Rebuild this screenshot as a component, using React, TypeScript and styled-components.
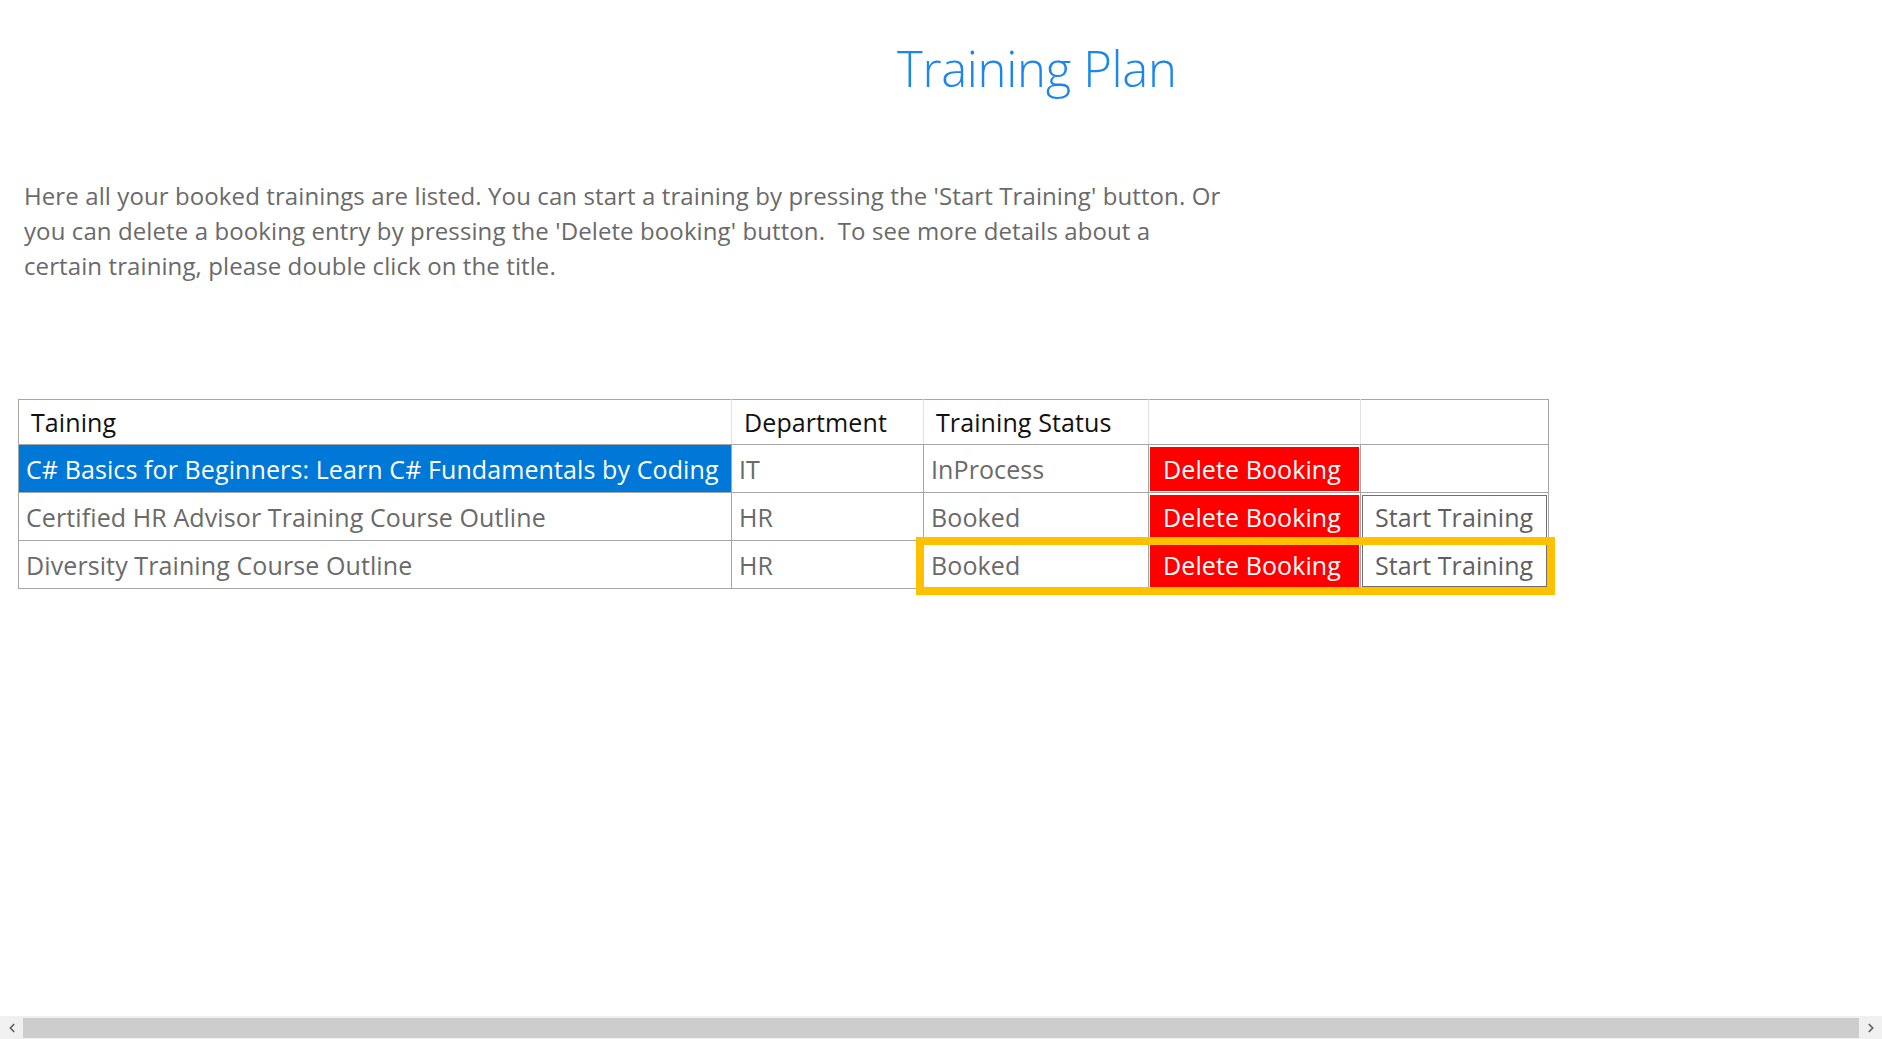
import React from 'react';
import styled, { createGlobalStyle } from 'styled-components';
import { ChevronLeft, ChevronRight } from 'lucide-react';

const GlobalStyle = createGlobalStyle`
  * {
    box-sizing: border-box;
  }

  html, body {
    margin: 0;
    padding: 0;
    background: #fff;
    font-family: "Open Sans", "Noto Sans", sans-serif;
    overflow: hidden;
  }
`;

const Screen = styled.div`
  display: flex;
  flex-direction: column;
  height: 100vh;
`;

const Content = styled.main`
  flex: 1;
  padding: 0 0 0 18px;
`;

const Title = styled.h1`
  margin: 0;
  padding: 34px 0 0 879px;
  font-size: 49px;
  font-weight: 300;
  line-height: 68px;
  color: #1a86ee;
  letter-spacing: -0.3px;
`;

const Intro = styled.p`
  margin: 76px 0 0 6px;
  font-size: 24px;
  line-height: 35px;
  color: #6a6a6a;
  letter-spacing: 0.1px;
  white-space: nowrap;
`;

const TableWrap = styled.div`
  position: relative;
  width: 1530px;
  margin-top: 116px;
`;

const Grid = styled.table`
  width: 1530px;
  border-collapse: collapse;
  table-layout: fixed;
  border: 1px solid #a6a6a6;
  font-size: 25px;
  letter-spacing: 0.1px;
`;

const HeadCell = styled.th`
  height: 45px;
  padding: 0 0 0 12px;
  text-align: left;
  font-weight: 400;
  color: #111;
  border-left: 1px solid #e2e2e2;
  border-bottom: 1px solid #a6a6a6;

  &:first-child {
    border-left: none;
  }
`;

const Cell = styled.td<{ $selected?: boolean; $tight?: boolean }>`
  height: 48px;
  padding: ${(p) => (p.$tight ? '1px' : '0 0 0 7px')};
  border: 1px solid #a6a6a6;
  white-space: nowrap;
  overflow: hidden;
  color: ${(p) => (p.$selected ? '#fff' : '#6a6a6a')};
  background: ${(p) => (p.$selected ? '#0078d7' : '#fff')};
`;

const ActionButton = styled.button<{ $danger?: boolean }>`
  display: block;
  width: 100%;
  height: 44px;
  margin: 0;
  padding: 0 0 0 12px;
  text-align: left;
  font-family: inherit;
  font-size: 25px;
  letter-spacing: 0.1px;
  cursor: pointer;
  color: ${(p) => (p.$danger ? '#fff' : '#5f5f5f')};
  background: ${(p) => (p.$danger ? '#ff0000' : '#fff')};
  border: 1px solid ${(p) => (p.$danger ? '#ff0000' : '#707070')};
`;

const Highlight = styled.div`
  position: absolute;
  left: 898px;
  top: 138px;
  width: 639px;
  height: 58px;
  border: 8px solid #ffc000;
  pointer-events: none;
`;

const ScrollBar = styled.div`
  display: flex;
  align-items: center;
  height: 23px;
  background: #f0f0f0;
  color: #606060;
`;

const ScrollArrow = styled.div`
  display: flex;
  align-items: center;
  justify-content: center;
  width: 23px;
  height: 23px;
`;

const ScrollThumb = styled.div`
  flex: 1;
  height: 20px;
  background: #cdcdcd;
`;

type Booking = {
  title: string;
  department: string;
  status: string;
  canStart: boolean;
  selected?: boolean;
};

const bookings: Booking[] = [
  {
    title: 'C# Basics for Beginners: Learn C# Fundamentals by Coding',
    department: 'IT',
    status: 'InProcess',
    canStart: false,
    selected: true,
  },
  {
    title: 'Certified HR Advisor Training Course Outline',
    department: 'HR',
    status: 'Booked',
    canStart: true,
  },
  {
    title: 'Diversity Training Course Outline',
    department: 'HR',
    status: 'Booked',
    canStart: true,
  },
];

const App = () => {
  return (
    <>
      <GlobalStyle />
      <Screen>
        <Content>
          <Title>Training Plan</Title>
          <Intro>
            Here all your booked trainings are listed. You can start a training by pressing the 'Start Training' button. Or
            <br />
            you can delete a booking entry by pressing the 'Delete booking' button.&nbsp; To see more details about a
            <br />
            certain training, please double click on the title.
          </Intro>
          <TableWrap>
            <Grid>
              <colgroup>
                <col style={{ width: 713 }} />
                <col style={{ width: 192 }} />
                <col style={{ width: 225 }} />
                <col style={{ width: 212 }} />
                <col style={{ width: 188 }} />
              </colgroup>
              <thead>
                <tr>
                  <HeadCell>Taining</HeadCell>
                  <HeadCell>Department</HeadCell>
                  <HeadCell>Training Status</HeadCell>
                  <HeadCell />
                  <HeadCell />
                </tr>
              </thead>
              <tbody>
                {bookings.map((b) => (
                  <tr key={b.title}>
                    <Cell $selected={b.selected}>{b.title}</Cell>
                    <Cell>{b.department}</Cell>
                    <Cell>{b.status}</Cell>
                    <Cell $tight>
                      <ActionButton $danger>Delete Booking</ActionButton>
                    </Cell>
                    <Cell $tight>{b.canStart && <ActionButton>Start Training</ActionButton>}</Cell>
                  </tr>
                ))}
              </tbody>
            </Grid>
            <Highlight />
          </TableWrap>
        </Content>
        <ScrollBar>
          <ScrollArrow>
            <ChevronLeft size={14} strokeWidth={3} />
          </ScrollArrow>
          <ScrollThumb />
          <ScrollArrow>
            <ChevronRight size={14} strokeWidth={3} />
          </ScrollArrow>
        </ScrollBar>
      </Screen>
    </>
  );
};

export default App;
